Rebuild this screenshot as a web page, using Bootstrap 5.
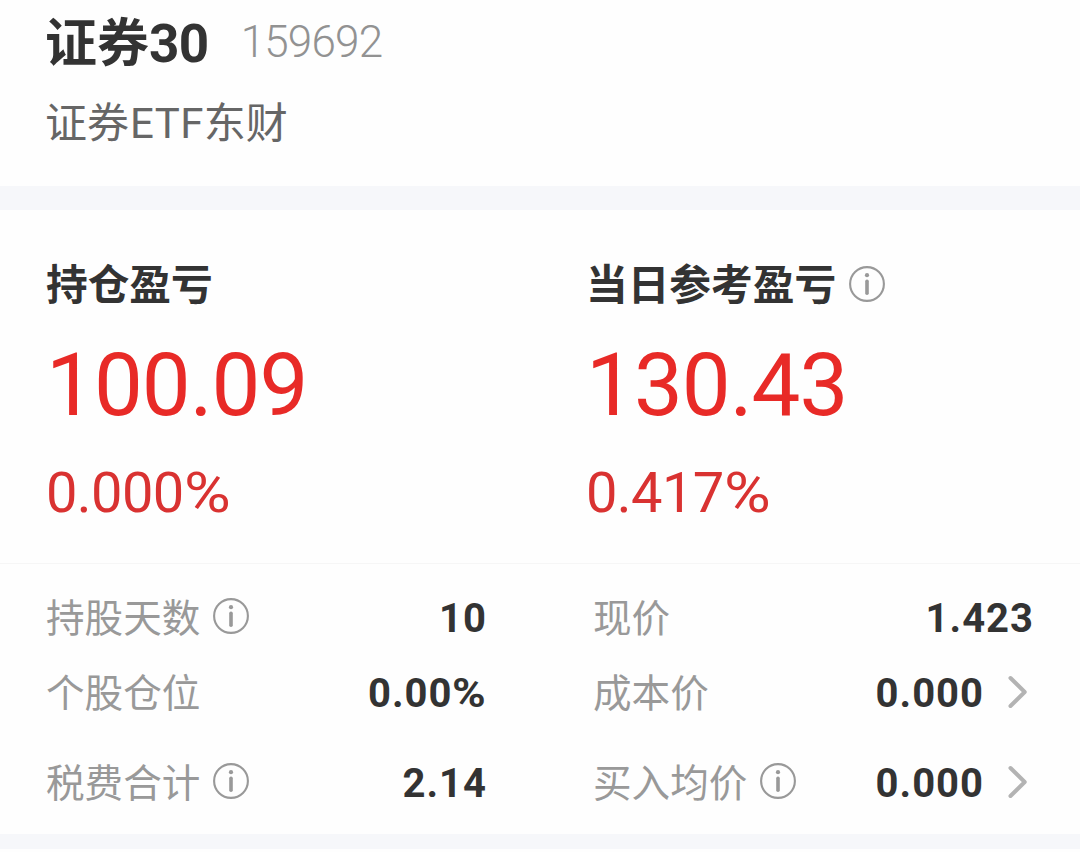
<!DOCTYPE html>
<html lang="zh-CN">
<head>
  <meta charset="UTF-8" />
  <meta name="viewport" content="width=device-width, initial-scale=1" />
  <title>证券30 159692</title>
  <link href="https://cdn.jsdelivr.net/npm/bootstrap@5.3.0/dist/css/bootstrap.min.css" rel="stylesheet" />
  <style>
    body {
      font-family: Roboto, "Noto Sans CJK SC", sans-serif;
      color: #333;
      background-color: #fefefe;
    }
    .cabecalho {
      height: 186px;
      padding: 8px 45px 0;
    }
    .nome {
      font-size: 52px;
      line-height: 72px;
      font-weight: 700;
    }
    .nome span {
      font-size: 53px;
      letter-spacing: -.6px;
    }
    .codigo {
      margin-left: 32px;
      padding-bottom: 6px;
      font-size: 44px;
      line-height: 66px;
      font-weight: 300;
      letter-spacing: -.8px;
      color: #929292;
    }
    .fundo {
      margin-top: 13px;
      font-size: 42px;
      line-height: 60px;
      color: #666;
    }
    .fundo span {
      margin-left: 1px;
      letter-spacing: .4px;
    }
    .faixa {
      height: 24px;
      background-color: #f6f7fa;
    }
    .faixa-final {
      height: 15px;
    }
    .resumo {
      height: 354px;
      padding: 45px 46px 0;
      border-bottom: 1px solid #f6f6f6;
    }
    .resumo > div {
      flex: 0 0 540px;
    }
    .titulo {
      padding-top: 1px;
      font-size: 41.7px;
      line-height: 60px;
      font-weight: 700;
    }
    .valor {
      margin-top: 16px;
      font-size: 87px;
      line-height: 106px;
      letter-spacing: -1px;
      color: #e82a27;
    }
    .percentual {
      margin-top: 17px;
      font-size: 56px;
      line-height: 76px;
      letter-spacing: -.6px;
      color: #d93231;
    }
    /* sinal de % mais largo que o da fonte */
    .pct {
      display: inline-block;
      transform: scaleX(1.14);
      transform-origin: left;
    }
    .numero .pct {
      margin-right: 4px;
    }
    .detalhes {
      height: 270px;
      padding: 16px 46px 0;
      column-gap: 106px;
    }
    .coluna {
      flex: 0 0 441px;
    }
    .linha {
      height: 75px;
      font-size: 38.6px;
      line-height: 75px;
    }
    .linha-final {
      margin-top: 15px;
    }
    .rotulo {
      padding-top: 2px;
      line-height: 73px;
      color: #999;
    }
    .numero {
      padding-top: 2px;
      font-size: 40px;
      line-height: 73px;
      font-weight: 700;
      letter-spacing: 1px;
    }
    .info {
      width: 36px;
      height: 36px;
      margin: 0 0 3px 13px;
      flex: none;
    }
    .titulo .info {
      margin-bottom: 4px;
    }
    .seta {
      width: 20px;
      height: 34px;
      margin: 0 6px 2px 24px;
      flex: none;
    }
  </style>
</head>
<body>
<svg class="d-none">
  <symbol id="icone-info" viewBox="0 0 36 36">
    <circle cx="18" cy="18" r="16.9" fill="none" stroke="#999" stroke-width="2.1" />
    <circle cx="18" cy="9.2" r="2.1" fill="#999" />
    <path d="M18 15.3V27.2" stroke="#999" stroke-width="3.6" stroke-linecap="round" />
  </symbol>
  <symbol id="icone-seta" viewBox="0 0 20 34">
    <path d="M2.5 3L16.7 17L2.5 31" fill="none" stroke="#b3b3b3" stroke-width="4" stroke-linecap="round" stroke-linejoin="round" />
  </symbol>
</svg>

<header class="cabecalho">
  <div class="d-flex align-items-center">
    <div class="nome">证券<span>30</span></div>
    <div class="codigo">159692</div>
  </div>
  <div class="fundo">证券<span>ETF</span>东财</div>
</header>

<div class="faixa"></div>

<section class="resumo d-flex">
  <div>
    <div class="titulo">持仓盈亏</div>
    <div class="valor">100.09</div>
    <div class="percentual">0.000<span class="pct">%</span></div>
  </div>
  <div>
    <div class="titulo d-flex align-items-center">当日参考盈亏<svg class="info"><use href="#icone-info" /></svg></div>
    <div class="valor">130.43</div>
    <div class="percentual">0.417<span class="pct">%</span></div>
  </div>
</section>

<section class="detalhes d-flex">
  <div class="coluna">
    <div class="linha d-flex align-items-center">
      <span class="rotulo">持股天数</span>
      <svg class="info"><use href="#icone-info" /></svg>
      <span class="numero ms-auto">10</span>
    </div>
    <div class="linha d-flex align-items-center">
      <span class="rotulo">个股仓位</span>
      <span class="numero ms-auto">0.00<span class="pct">%</span></span>
    </div>
    <div class="linha linha-final d-flex align-items-center">
      <span class="rotulo">税费合计</span>
      <svg class="info"><use href="#icone-info" /></svg>
      <span class="numero ms-auto">2.14</span>
    </div>
  </div>
  <div class="coluna">
    <div class="linha d-flex align-items-center">
      <span class="rotulo">现价</span>
      <span class="numero ms-auto">1.423</span>
    </div>
    <div class="linha d-flex align-items-center">
      <span class="rotulo">成本价</span>
      <span class="numero ms-auto">0.000</span>
      <svg class="seta"><use href="#icone-seta" /></svg>
    </div>
    <div class="linha linha-final d-flex align-items-center">
      <span class="rotulo">买入均价</span>
      <svg class="info"><use href="#icone-info" /></svg>
      <span class="numero ms-auto">0.000</span>
      <svg class="seta"><use href="#icone-seta" /></svg>
    </div>
  </div>
</section>

<div class="faixa faixa-final"></div>

<script src="https://cdn.jsdelivr.net/npm/bootstrap@5.3.0/dist/js/bootstrap.bundle.min.js"></script>
</body>
</html>
